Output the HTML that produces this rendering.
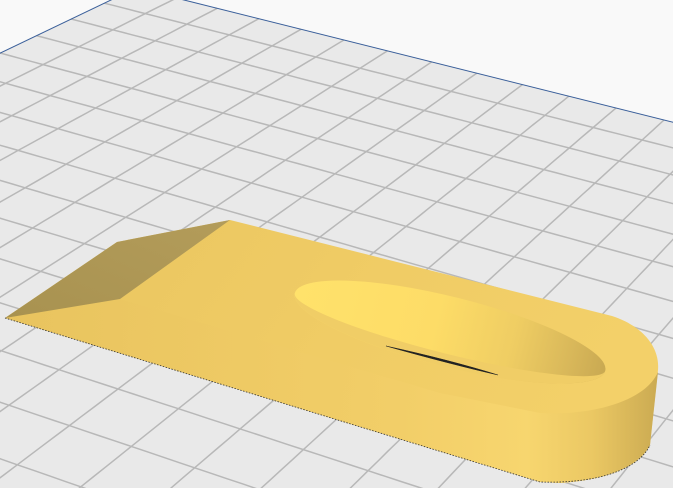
<!DOCTYPE html>
<html><head><meta charset="utf-8"><style>
html,body{margin:0;padding:0;background:#f9f9f9;width:673px;height:488px;overflow:hidden;position:relative}
svg{display:block;position:absolute;left:0;top:0}
</style></head><body>
<svg id="s" width="673" height="488" viewBox="0 0 673 488" xmlns="http://www.w3.org/2000/svg">
<defs>
<linearGradient id="dark" x1="0" y1="1" x2="1" y2="0"><stop offset="0" stop-color="#a89250"/><stop offset="1" stop-color="#b39c5a"/></linearGradient>
<linearGradient id="top" x1="0" y1="0" x2="1" y2="0.3"><stop offset="0" stop-color="#e9c560"/><stop offset="0.6" stop-color="#f0cc65"/><stop offset="1" stop-color="#f3d069"/></linearGradient>
<linearGradient id="front" x1="0" y1="0" x2="1" y2="0"><stop offset="0" stop-color="#e8c35e"/><stop offset="0.6" stop-color="#f2ce68"/><stop offset="0.8" stop-color="#f8d770"/><stop offset="0.9" stop-color="#e9c662"/><stop offset="1" stop-color="#c4a44e"/></linearGradient>
<linearGradient id="hole" x1="0" y1="0" x2="1" y2="0"><stop offset="0" stop-color="#ffe26b"/><stop offset="0.45" stop-color="#fddc67"/><stop offset="0.7" stop-color="#efcd63"/><stop offset="0.88" stop-color="#d9b85a"/><stop offset="1" stop-color="#c9a952"/></linearGradient>
</defs>
<polygon points="136,-12 700,129 700,500 -10,500 -10,58" fill="#e9e9e9"/>
<g id="grid" stroke="#b8b8b8" stroke-width="1.5" fill="none"></g>
<polyline points="136,-12 700,129" stroke="#3a5f9a" stroke-width="1" fill="none"/>
<polyline points="136,-12 -10,58" stroke="#3a5f9a" stroke-width="1" fill="none"/>

<path d="M5,318 L117,242 L230,220 L612,316 C640,325 660,345 658,370 L650,445 C640,465 610,480 560,483 L540,482 Z" fill="url(#top)"/>
<path d="M5,318 L120,299 L440,393 L540,413 C590,416 645,402 658,372 L650,445 C640,465 610,480 560,483 L540,482 Z" fill="url(#front)" opacity="0.85"/>
<polygon points="5,318 117,242 230,220 120,299" fill="url(#dark)"/>
<g transform="translate(450,332) rotate(14)">
<ellipse cx="0" cy="0" rx="160" ry="35" fill="url(#hole)"/>
<path d="M-160,0 A160,35 0 0 0 160,0 A160,22 0 0 1 -160,0 Z" fill="#f0cd66"/>
</g>
<path d="M386,346 Q450,360 498,375 Q450,364 386,346 Z" fill="#222" stroke="#222" stroke-width="0.6"/>
<path d="M5,318 L540,482 C600,484 640,468 650,445" stroke="#333" stroke-width="0.8" stroke-dasharray="1.5 1.5" fill="none"/>
</svg>
<script>
(function(){
var src=[[0,0],[12,0],[0,4],[9,12]];
var dst=[[136,-12],[664,120],[0,53],[118,389]];
var A=[],b=[];
for(var i=0;i<4;i++){var u=src[i][0],v=src[i][1],x=dst[i][0],y=dst[i][1];
A.push([u,v,1,0,0,0,-u*x,-v*x]);b.push(x);
A.push([0,0,0,u,v,1,-u*y,-v*y]);b.push(y);}
var n=8;
for(var c=0;c<n;c++){var p=c;for(var r=c+1;r<n;r++)if(Math.abs(A[r][c])>Math.abs(A[p][c]))p=r;
var t=A[c];A[c]=A[p];A[p]=t;t=b[c];b[c]=b[p];b[p]=t;
for(var r=0;r<n;r++){if(r==c)continue;var f=A[r][c]/A[c][c];for(var k=c;k<n;k++)A[r][k]-=f*A[c][k];b[r]-=f*b[c];}}
var h=[];for(var i=0;i<n;i++)h.push(b[i]/A[i][i]);
function P(u,v){var d=h[6]*u+h[7]*v+1;if(d<=0.02)return null;return [(h[0]*u+h[1]*v+h[2])/d,(h[3]*u+h[4]*v+h[5])/d];}
var g=document.getElementById('grid'),ns='http://www.w3.org/2000/svg';
function line(f){var pts=[];for(var s=0;s<=60;s+=0.25){var q=f(s);if(!q)break;if(Math.abs(q[0])>3000||Math.abs(q[1])>3000)break;pts.push(q[0].toFixed(1)+','+q[1].toFixed(1));}
if(pts.length>1){var e=document.createElementNS(ns,'polyline');e.setAttribute('points',pts.join(' '));g.appendChild(e);}}
for(var u=1;u<=60;u++)line(function(s){return P(u,s);});
for(var w=1;w<=60;w++)line(function(s){return P(s,w);});
})();
</script>
</body></html>
